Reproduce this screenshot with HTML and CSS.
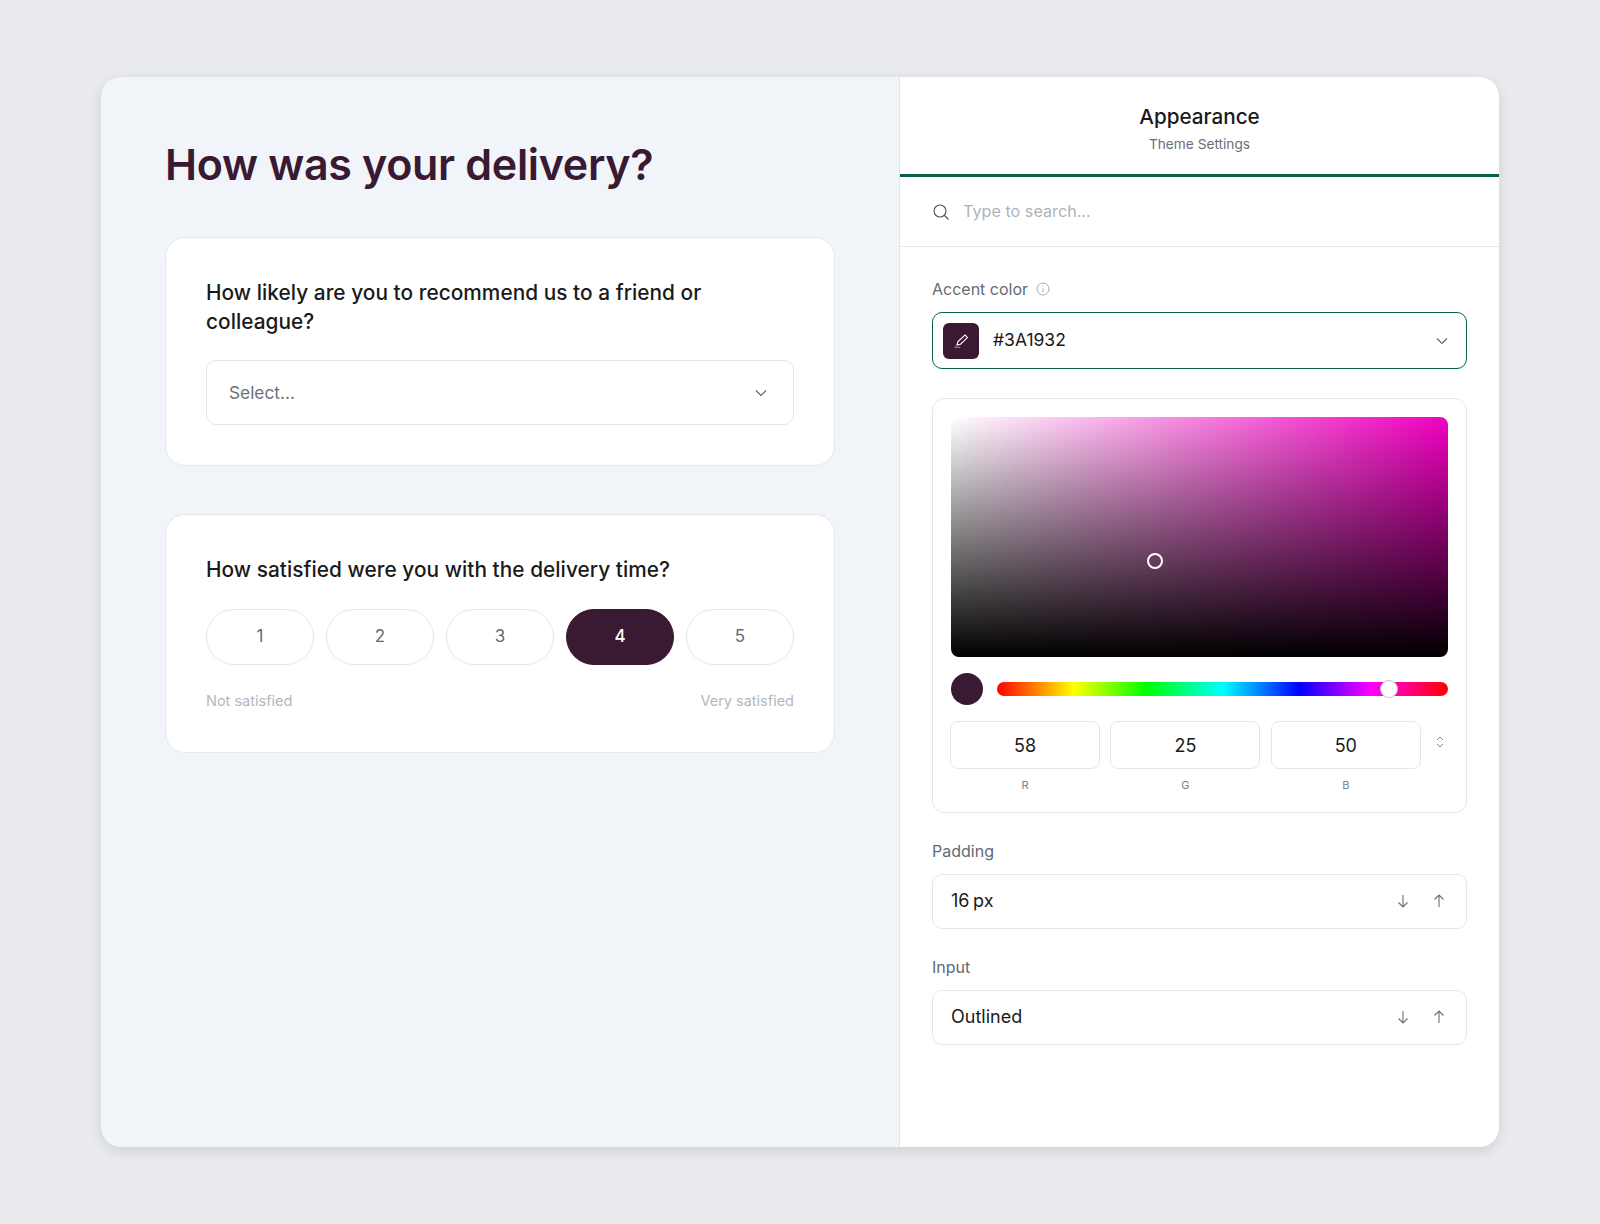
FILE: index.html
```html
<!doctype html>
<html>
  <head>
    <meta charset="UTF-8" />
    <title>Delivery survey theme settings</title>
    <link rel="stylesheet" href="styles.css">
  </head>
  <body>
    <div class="panel">
      <!-- Survey preview -->
      <div class="preview">
        <h1>How was your delivery?</h1>

        <div class="card">
          <div class="question">How likely are you to recommend us to a friend or colleague?</div>
          <div class="select">
            <span>Select...</span>
            <svg class="chevron" viewBox="0 0 12 12"><path d="M1 3.5l5 5 5-5" /></svg>
          </div>
        </div>

        <div class="card card-rating">
          <div class="question">How satisfied were you with the delivery time?</div>
          <div class="rating">
            <div class="pill">1</div>
            <div class="pill">2</div>
            <div class="pill">3</div>
            <div class="pill selected">4</div>
            <div class="pill">5</div>
          </div>
          <div class="rating-labels">
            <span>Not satisfied</span>
            <span>Very satisfied</span>
          </div>
        </div>
      </div>

      <!-- Settings sidebar -->
      <div class="sidebar">
        <div class="sidebar-header">
          <div class="sidebar-title">Appearance</div>
          <div class="sidebar-subtitle">Theme Settings</div>
        </div>

        <div class="search">
          <svg class="search-icon" viewBox="0 0 18 18"><circle cx="8" cy="8" r="6" /><path d="M12.5 12.5l4 4" /></svg>
          <span class="search-text">Type to search...</span>
        </div>

        <div class="settings">
          <div class="field-label">
            Accent color
            <svg class="info-icon" viewBox="0 0 14 14"><circle cx="7" cy="7" r="6" /><path d="M7 6.2v4M7 3.8v.8" /></svg>
          </div>
          <div class="color-select">
            <div class="swatch">
              <svg viewBox="0 0 16 16"><path d="M4 12l1-3.4 7-6.6 2.5 2.6-7 6.6z" /><path class="pen-line" d="M1.3 14.2h6" /></svg>
            </div>
            <span class="color-value">#3A1932</span>
            <svg class="chevron" viewBox="0 0 12 12"><path d="M1 3.5l5 5 5-5" /></svg>
          </div>

          <div class="picker">
            <div class="picker-area">
              <div class="picker-marker"></div>
            </div>
            <div class="hue-row">
              <div class="current-color"></div>
              <div class="hue-slider">
                <div class="hue-thumb"></div>
              </div>
            </div>
            <div class="rgb-grid">
              <div class="rgb-item">
                <div class="rgb-input">58</div>
                <div class="rgb-label">R</div>
              </div>
              <div class="rgb-item">
                <div class="rgb-input">25</div>
                <div class="rgb-label">G</div>
              </div>
              <div class="rgb-item">
                <div class="rgb-input">50</div>
                <div class="rgb-label">B</div>
              </div>
              <svg class="stepper" viewBox="0 0 10 14"><path d="M2 5l3-3 3 3M2 9l3 3 3-3" /></svg>
            </div>
          </div>

          <div class="field-label">Padding</div>
          <div class="stepper-select">
            <span>16 px</span>
            <svg class="arrow" viewBox="0 0 14 14"><path d="M7 1v12M2.5 8.5L7 13l4.5-4.5" /></svg>
            <svg class="arrow" viewBox="0 0 14 14"><path d="M7 13V1M2.5 5.5L7 1l4.5 4.5" /></svg>
          </div>

          <div class="field-label">Input</div>
          <div class="stepper-select">
            <span>Outlined</span>
            <svg class="arrow" viewBox="0 0 14 14"><path d="M7 1v12M2.5 8.5L7 13l4.5-4.5" /></svg>
            <svg class="arrow" viewBox="0 0 14 14"><path d="M7 13V1M2.5 5.5L7 1l4.5 4.5" /></svg>
          </div>
        </div>
      </div>
    </div>
  </body>
</html>
```

FILE: styles.css
```css
* {
  box-sizing: border-box;
}

body {
  font-family: Inter, "Noto Sans", sans-serif;
  margin: 0;
  padding: 77px 101px;
  background-color: #e9ebee;
  color: #1a1a1a;
}

svg {
  fill: none;
  stroke: currentColor;
  flex-shrink: 0;
}

.panel {
  display: flex;
  height: 1070px;
  border-radius: 20px;
  overflow: hidden;
  background: #f1f5f9;
  box-shadow: 0 4px 14px rgba(0, 0, 0, 0.12);
}

.preview {
  width: 798px;
  padding: 59px 64px 0;
}

h1 {
  margin: 0 0 45px;
  font-size: 43px;
  line-height: 56px;
  font-weight: 600;
  letter-spacing: -0.33px;
  color: #3a1932;
}

.card {
  background: white;
  border: 1px solid #e5e7eb;
  border-radius: 20px;
  padding: 40px;
  margin-bottom: 48px;
}

.card-rating {
  padding-bottom: 41px;
}

.question {
  font-size: 20.8px;
  line-height: 29px;
  font-weight: 500;
  letter-spacing: 0.05px;
  color: #1a1a1a;
}

.select {
  display: flex;
  align-items: center;
  justify-content: space-between;
  height: 65px;
  margin-top: 24px;
  padding: 0 26px 0 22px;
  border: 1px solid #e5e7eb;
  border-radius: 10px;
  font-size: 17.3px;
  color: #6b6f76;
}

.chevron {
  width: 12px;
  height: 12px;
  stroke-width: 1.1;
  color: #5f6368;
}

.rating {
  display: grid;
  grid-template-columns: repeat(5, 1fr);
  gap: 12px;
  margin-top: 25px;
}

.pill {
  display: flex;
  align-items: center;
  justify-content: center;
  height: 56px;
  padding-bottom: 2px;
  border: 1px solid #e5e7eb;
  border-radius: 28px;
  font-size: 17px;
  color: #5f6b76;
}

.pill.selected {
  background: #3a1932;
  border-color: #3a1932;
  color: white;
  font-weight: 500;
}

.rating-labels {
  display: flex;
  justify-content: space-between;
  margin-top: 26px;
  font-size: 14.5px;
  line-height: 20px;
  color: #b4b7bc;
}

.sidebar {
  flex: 1;
  background: white;
  border-left: 1px solid #e5e7eb;
}

.sidebar-header {
  height: 100px;
  padding-top: 26px;
  text-align: center;
  border-bottom: 3px solid #0b5c4b;
}

.sidebar-title {
  font-size: 20.7px;
  line-height: 28px;
  font-weight: 500;
}

.sidebar-subtitle {
  margin-top: 3px;
  font-size: 13.7px;
  line-height: 20px;
  color: #6b6f76;
}

.search {
  display: flex;
  align-items: center;
  gap: 12px;
  height: 70px;
  padding: 0 32px;
  border-bottom: 1px solid #e5e7eb;
  font-size: 16.2px;
  color: #b0b3b8;
}

.search-text {
  margin: 0 0 2px 1px;
}

.search-icon {
  width: 18px;
  height: 18px;
  stroke-width: 1.2;
  color: #55595f;
}

.settings {
  padding: 32px 32px 0;
}

.field-label {
  display: flex;
  align-items: center;
  gap: 8px;
  margin-bottom: 13px;
  font-size: 16px;
  line-height: 20px;
  color: #5f6b76;
}

.info-icon {
  width: 14px;
  height: 14px;
  stroke-width: 1;
  color: #a9adb2;
}

.color-select {
  display: flex;
  align-items: center;
  height: 57px;
  padding: 0 18px 0 10px;
  border: 1px solid #0b5c4b;
  border-radius: 10px;
  margin-bottom: 29px;
}

.swatch {
  display: flex;
  align-items: center;
  justify-content: center;
  width: 36px;
  height: 36px;
  border-radius: 6px;
  background: #3a1932;
  color: white;
}

.swatch svg {
  width: 16px;
  height: 16px;
  stroke-width: 1.1;
}

.pen-line {
  stroke: #a890a3;
}

.color-value {
  flex: 1;
  margin: 0 0 2px 14px;
  font-size: 17.5px;
}

.picker {
  height: 415px;
  padding: 18px;
  border: 1px solid #e5e7eb;
  border-radius: 12px;
  margin-bottom: 28px;
}

.picker-area {
  position: relative;
  height: 240px;
  border-radius: 8px;
  background:
    linear-gradient(to bottom, rgba(0, 0, 0, 0), #000),
    linear-gradient(to right, #fff, #f000c0);
}

.picker-marker {
  position: absolute;
  left: 196px;
  top: 136px;
  width: 16px;
  height: 16px;
  border: 2px solid white;
  border-radius: 50%;
}

.hue-row {
  display: flex;
  align-items: center;
  gap: 14px;
  margin-top: 16px;
}

.current-color {
  width: 32px;
  height: 32px;
  border-radius: 50%;
  background: #3a1932;
}

.hue-slider {
  position: relative;
  flex: 1;
  height: 14px;
  border-radius: 7px;
  background: linear-gradient(to right, #f00, #ff0 17%, #0f0 33%, #0ff 50%, #00f 67%, #f0f 83%, #f00);
}

.hue-thumb {
  position: absolute;
  left: 383px;
  top: -2px;
  width: 18px;
  height: 18px;
  border: 1px solid #c4c6c9;
  border-radius: 50%;
  background: white;
}

.rgb-grid {
  display: grid;
  grid-template-columns: repeat(3, 150px) 1fr;
  gap: 10.4px;
  margin-top: 16px;
  margin-left: -1px;
}

.rgb-input {
  display: flex;
  align-items: center;
  justify-content: center;
  height: 48px;
  border: 1px solid #e5e7eb;
  border-radius: 8px;
  font-size: 18px;
}

.rgb-label {
  margin-top: 8px;
  font-size: 11px;
  line-height: 16px;
  text-align: center;
  color: #7b7f85;
}

.stepper {
  width: 10px;
  height: 14px;
  margin: 14px 0 0 4px;
  stroke-width: 1;
  color: #8a8d92;
}

.stepper-select {
  display: flex;
  align-items: center;
  gap: 22px;
  height: 55px;
  padding: 0 20px 0 18px;
  border: 1px solid #e5e7eb;
  border-radius: 10px;
  margin-bottom: 28px;
  font-size: 18px;
}

.stepper-select span {
  flex: 1;
  margin-bottom: 2px;
  word-spacing: -1.5px;
}

.arrow {
  width: 14px;
  height: 14px;
  margin-bottom: 2px;
  stroke-width: 1.1;
  color: #6b6f76;
}
```
